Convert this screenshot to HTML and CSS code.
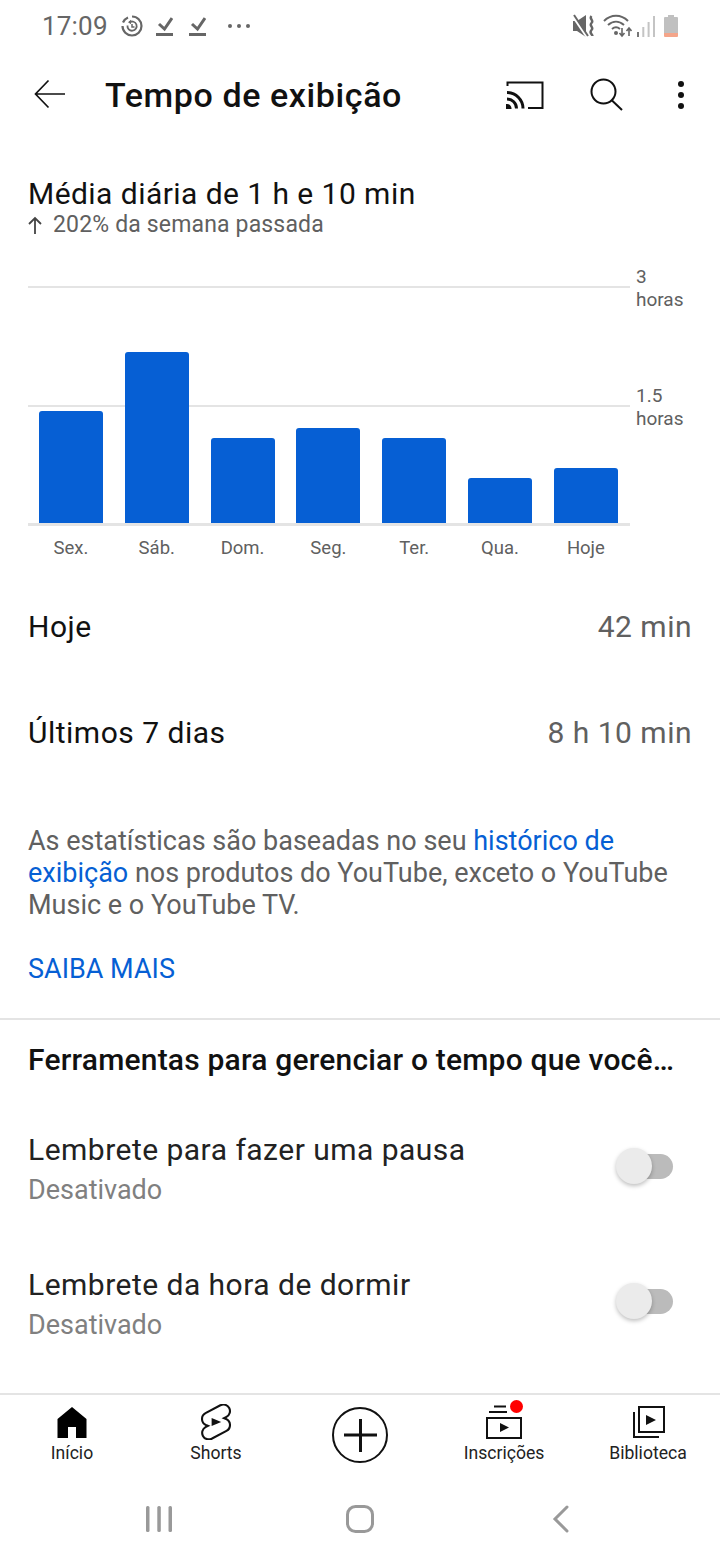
FILE: index.html
```html
<!DOCTYPE html>
<html lang="pt-BR">
<head>
    <meta charset="UTF-8">
    <title>Tempo de exibição</title>
    <link rel="stylesheet" href="styles.css">
</head>
<body>
    <div class="screen">
        <!-- Status bar -->
        <div class="status-bar">
            <span class="clock">17:09</span>
            <svg class="st-icon" width="22" height="22" viewBox="0 0 22 22" fill="none" stroke="#666"><path d="M11 1.500a9.500 9.500 0 1 1-9.500 9.500" stroke-width="2.200"/><path d="M2 7.500A9.500 9.500 0 0 1 7 2.400" stroke-width="2.200"/><path d="M6.500 10.500a4.600 4.600 0 1 0 2-3.200" stroke-width="1.800"/><path d="M10 4.800v4.400l-3-2z" fill="#666" stroke="none"/><path d="M11 9v3h2.500" stroke-width="1.500"/></svg>
            <svg class="st-icon check-one" width="17" height="20" viewBox="0 0 17 20" fill="none" stroke="#666" stroke-width="3"><path d="M3 8l5.500 5L16 2"/><path d="M0 18.500h17"/></svg>
            <svg class="st-icon check-two" width="17" height="20" viewBox="0 0 17 20" fill="none" stroke="#666" stroke-width="3"><path d="M3 8l5.500 5L16 2"/><path d="M0 18.500h17"/></svg>
            <span class="dots"><i></i><i></i><i></i></span>
            <span class="status-right">
                <svg width="24" height="24" viewBox="0 0 24 24"><path d="M1 7h4l9-6v22l-9-6H1z" fill="#666"/><path d="M0 1l15 22" stroke="#fff" stroke-width="2.500"/><path d="M2 1l14 21" stroke="#666" stroke-width="2"/><path d="M19.500 2c-3 3 3 4 0 7s3 4 0 7 1 4 1 6" fill="none" stroke="#666" stroke-width="2.400"/></svg>
                <svg class="wifi" width="29" height="24" viewBox="0 0 29 24" fill="none" stroke="#666" stroke-width="2"><path d="M1 7c7-7 17-7 24 0"/><path d="M5 11c5-4.500 11-4.500 16 0"/><path d="M9 15c3-2.500 5-2.500 8 0"/><circle cx="13" cy="19" r="2" fill="#666" stroke="none"/><path d="M19 14v8m-2.500-3l2.500 3 2.500-3M26 22v-8m-2.500 3l2.500-3 2.500 3" stroke-width="1.600"/></svg>
                <svg class="signal" width="18" height="22" viewBox="0 0 18 22"><path d="M0 17h2v5H0z" fill="#777"/><path d="M5.300 12h2v10h-2zM10.600 7h2v15h-2zM16 1h2v21h-2z" fill="#c4c4c4"/></svg>
                <svg class="battery" width="14" height="22" viewBox="0 0 14 22"><path d="M4 0h6v2h3a1 1 0 0 1 1 1v15H0V3a1 1 0 0 1 1-1h3z" fill="#c0c0c0"/><path d="M0 18h14v3a1 1 0 0 1-1 1H1a1 1 0 0 1-1-1z" fill="#f4a58a"/></svg>
            </span>
        </div>

        <!-- Header -->
        <header class="app-bar">
            <svg class="back" width="34" height="34" viewBox="0 0 34 34" fill="none" stroke="#111" stroke-width="1.700"><path d="M32 16H3M15.500 2.500L2.500 16l13 13.500"/></svg>
            <h1>Tempo de exibição</h1>
            <svg class="cast" width="38" height="30" viewBox="0 0 38 30" fill="none" stroke="#111" stroke-width="2"><path d="M1.500 6V2.500h35V28H22"/><path d="M1 12.500A16 16 0 0 1 17 28.500" stroke-width="3"/><path d="M1 19A9.500 9.500 0 0 1 10.500 28.500" stroke-width="3"/><path d="M0 24h1a4.500 4.500 0 0 1 4.500 5H0z" fill="#111" stroke="none"/></svg>
            <svg class="search" width="34" height="34" viewBox="0 0 34 34" fill="none" stroke="#111" stroke-width="2"><circle cx="13.500" cy="13.500" r="12"/><path d="M21.500 22L32 32"/></svg>
            <span class="more"><i></i><i></i><i></i></span>
        </header>

        <!-- Summary -->
        <section class="summary">
            <h2>Média diária de 1 h e 10 min</h2>
            <p class="trend">
                <svg width="14" height="18" viewBox="0 0 14 18" fill="none" stroke="#444" stroke-width="1.800"><path d="M7 18V2M1 8l6-6 6 6"/></svg>
                <span>202% da semana passada</span>
            </p>
        </section>

        <!-- Chart -->
        <section class="chart">
            <div class="plot">
                <div class="grid-line top-line"></div>
                <div class="grid-line mid-line"></div>
                <span class="axis-label top-label">3<br>horas</span>
                <span class="axis-label mid-label">1.5<br>horas</span>
                <div class="bars">
                    <div class="bar" style="height: 112px"></div>
                    <div class="bar" style="height: 171px"></div>
                    <div class="bar" style="height: 85px"></div>
                    <div class="bar" style="height: 95px"></div>
                    <div class="bar" style="height: 85px"></div>
                    <div class="bar" style="height: 45px"></div>
                    <div class="bar" style="height: 55px"></div>
                </div>
            </div>
            <div class="days">
                <span>Sex.</span><span>Sáb.</span><span>Dom.</span><span>Seg.</span><span>Ter.</span><span>Qua.</span><span>Hoje</span>
            </div>
        </section>

        <!-- Totals -->
        <section class="totals">
            <div class="total-row"><span>Hoje</span><span class="value">42 min</span></div>
            <div class="total-row"><span>Últimos 7 dias</span><span class="value">8 h 10 min</span></div>
        </section>

        <p class="note">As estatísticas são baseadas no seu <a href="#">histórico de exibição</a> nos produtos do YouTube, exceto o YouTube Music e o YouTube TV.</p>
        <a class="learn-more" href="#">SAIBA MAIS</a>

        <hr class="divider">

        <!-- Tools -->
        <section class="tools">
            <h3>Ferramentas para gerenciar o tempo que você assiste</h3>
            <div class="tool-row">
                <div>
                    <div class="tool-name">Lembrete para fazer uma pausa</div>
                    <div class="tool-state">Desativado</div>
                </div>
                <span class="switch"><span class="knob"></span></span>
            </div>
            <div class="tool-row">
                <div>
                    <div class="tool-name">Lembrete da hora de dormir</div>
                    <div class="tool-state">Desativado</div>
                </div>
                <span class="switch"><span class="knob"></span></span>
            </div>
        </section>

        <!-- Bottom tabs -->
        <nav class="tabs">
            <a class="tab" href="#">
                <svg width="36" height="36" viewBox="0 0 36 36"><path d="M18 3L3.500 15v19H14V23h8v11h10.500V15z" fill="#000"/></svg>
                <span>Início</span>
            </a>
            <a class="tab" href="#">
                <svg width="32" height="36" viewBox="3 1.700 18 20.600" fill="none" stroke="#111" stroke-width="1.200"><path d="M17.770 10.320l-1.200-.5L18 9.060a3.740 3.740 0 0 0-3.500-6.620L6 6.940a3.740 3.740 0 0 0 .23 6.740l1.200.49L6 14.930a3.750 3.750 0 0 0 3.500 6.630l8.500-4.500a3.740 3.740 0 0 0-.23-6.740z"/><path d="M9.500 9.700L15 12l-5.500 2.300z" fill="#111" stroke="none"/></svg>
                <span>Shorts</span>
            </a>
            <a class="tab create" href="#">
                <svg width="56" height="56" viewBox="0 0 56 56" fill="none" stroke="#111"><circle cx="28" cy="28" r="27" stroke-width="2"/><path d="M12 28h33M28.500 12v33" stroke-width="3"/></svg>
            </a>
            <a class="tab" href="#">
                <span class="tab-icon">
                    <svg width="36" height="36" viewBox="0 0 36 36" fill="none" stroke="#111" stroke-width="2"><path d="M8 2.500h12M3 8h18"/><path d="M1 14h34v20H1z"/><path d="M14 19l9 4.500-9 4.500z" fill="#111" stroke="none"/></svg>
                    <i class="dot"></i>
                </span>
                <span>Inscrições</span>
            </a>
            <a class="tab" href="#">
                <svg width="36" height="36" viewBox="0 0 36 36" fill="none" stroke="#111" stroke-width="2"><path d="M9 3h25v25H9z"/><path d="M4 8v25h25"/><path d="M16 11l10 5-10 5z" fill="#111" stroke="none"/></svg>
                <span>Biblioteca</span>
            </a>
        </nav>

        <!-- System navigation -->
        <div class="system-nav">
            <svg width="28" height="28" viewBox="0 0 28 28" fill="#999"><rect x="1" y="1" width="3.500" height="26" rx="1.500"/><rect x="12.300" y="1" width="3.500" height="26" rx="1.500"/><rect x="23.500" y="1" width="3.500" height="26" rx="1.500"/></svg>
            <svg width="28" height="28" viewBox="0 0 28 28" fill="none" stroke="#999" stroke-width="3"><rect x="1.500" y="1.500" width="25" height="25" rx="8"/></svg>
            <svg width="18" height="28" viewBox="0 0 18 28" fill="none" stroke="#999" stroke-width="3" stroke-linecap="round"><path d="M15 2L3 14l12 12"/></svg>
        </div>
    </div>
</body>
</html>
```

FILE: styles.css
```css
* {
    box-sizing: border-box;
}

body {
    margin: 0;
    background: #fff;
    font-family: Roboto, sans-serif;
    color: #111;
}

.screen {
    width: 720px;
    height: 1560px;
    overflow: hidden;
}

i {
    display: block;
}

/* Status bar */
.status-bar {
    display: flex;
    align-items: center;
    height: 52px;
    padding: 0 42px;
    color: #666;
}
.clock {
    font-size: 26px;
    letter-spacing: 0.2px;
    margin-right: 13px;
}
.check-one {
    margin-left: 13px;
}
.check-two {
    margin-left: 16px;
}
.dots {
    display: flex;
    gap: 5px;
    margin-left: 22px;
}
.dots i {
    width: 4px;
    height: 4px;
    border-radius: 50%;
    background: #666;
}
.status-right {
    display: flex;
    align-items: center;
    margin-left: auto;
}
.wifi {
    margin-left: 7px;
}
.signal {
    margin-left: 5px;
}
.battery {
    margin-left: 9px;
}

/* Header */
.app-bar {
    display: flex;
    align-items: center;
    height: 86px;
    padding-left: 33px;
}
.app-bar h1 {
    flex: none;
    font-size: 34px;
    font-weight: 500;
    letter-spacing: 0.6px;
    margin: 0 0 0 38px;
    width: 401px;
    white-space: nowrap;
}
.search {
    margin-left: 46px;
}
.more {
    display: flex;
    flex-direction: column;
    gap: 5px;
    margin-left: 54px;
}
.more i {
    width: 6px;
    height: 6px;
    border-radius: 50%;
    background: #111;
}

/* Summary */
.summary {
    padding: 38px 28px 0;
}
.summary h2 {
    font-size: 30px;
    font-weight: 400;
    line-height: 36px;
    letter-spacing: 0.45px;
    margin: 0;
}
.trend {
    display: flex;
    align-items: center;
    gap: 11px;
    margin: 0;
    font-size: 23px;
    line-height: 26px;
    letter-spacing: 0.16px;
    color: #606060;
}

/* Chart */
.chart {
    padding: 0 28px;
    margin-top: 48px;
}
.plot {
    position: relative;
    width: 602px;
    height: 240px;
    border-bottom: 3px solid #e4e4e4;
}
.grid-line {
    position: absolute;
    left: 0;
    right: 0;
    height: 2px;
    background: #e4e4e4;
}
.top-line {
    top: 0;
}
.mid-line {
    top: 119px;
}
.axis-label {
    position: absolute;
    left: 608px;
    font-size: 19px;
    line-height: 23px;
    color: #606060;
    white-space: nowrap;
}
.top-label {
    top: -21px;
}
.mid-label {
    top: 98px;
}
.bars {
    position: absolute;
    left: 11px;
    bottom: 0;
    display: flex;
    align-items: flex-end;
    gap: 21.830px;
}
.bar {
    width: 64px;
    border-radius: 3px 3px 0 0;
    background: #065fd4;
}
.days {
    display: flex;
    width: 602px;
    padding-left: 0;
    margin-top: 10px;
    font-size: 18.500px;
    line-height: 24px;
    color: #606060;
}
.days span {
    width: 85.830px;
    text-align: center;
}

/* Totals */
.totals {
    padding: 0 28px;
    margin-top: 13px;
}
.total-row {
    display: flex;
    justify-content: space-between;
    align-items: center;
    height: 106px;
    font-size: 30px;
    letter-spacing: 0.5px;
}
.total-row .value {
    color: #606060;
}

.note {
    margin: 40px 28px 0;
    font-size: 27px;
    line-height: 32px;
    color: #606060;
}
.note a,
.learn-more {
    color: #065fd4;
    text-decoration: none;
}
.learn-more {
    display: block;
    margin: 32px 28px 0;
    font-size: 27px;
    line-height: 32px;
}
.divider {
    border: none;
    border-top: 2px solid #e4e4e4;
    margin: 33px 0 0;
}

/* Tools */
.tools {
    padding: 22px 28px 0;
    height: 373px;
}
.tools h3 {
    font-size: 30px;
    font-weight: 500;
    line-height: 36px;
    letter-spacing: 0.2px;
    margin: 0;
    white-space: nowrap;
    overflow: hidden;
    text-overflow: ellipsis;
    width: 650px;
}
.tool-row {
    display: flex;
    justify-content: space-between;
    align-items: center;
    height: 135px;
    padding-right: 18px;
}
.tools h3 + .tool-row {
    margin-top: 24px;
}
.tool-name {
    font-size: 30px;
    line-height: 40px;
    letter-spacing: 0.48px;
    color: #222;
}
.tool-state {
    font-size: 27px;
    line-height: 40px;
    color: #808080;
}
.switch {
    position: relative;
    display: block;
    width: 56px;
    height: 25px;
    margin-right: 1px;
    margin-bottom: 6px;
    border-radius: 13px;
    background: #bbb;
}
.knob {
    position: absolute;
    left: -1px;
    top: -6px;
    width: 36px;
    height: 36px;
    border-radius: 50%;
    background: #ebebeb;
    box-shadow: 0 2px 4px rgba(0, 0, 0, 0.25);
}

/* Bottom tabs */
.tabs {
    display: grid;
    grid-template-columns: repeat(5, 144px);
    height: 85px;
    padding-top: 9px;
    border-top: 2px solid #e4e4e4;
}
.tab {
    display: flex;
    flex-direction: column;
    align-items: center;
    gap: 2px;
    color: #222;
    text-decoration: none;
    font-size: 17.600px;
    line-height: 22px;
}
.create {
    padding-top: 3px;
}
.tab-icon {
    position: relative;
    display: block;
    height: 36px;
}
.dot {
    position: absolute;
    top: -4px;
    left: 23.500px;
    width: 13px;
    height: 13px;
    border-radius: 50%;
    background: #f00;
}

/* System navigation */
.system-nav {
    display: grid;
    grid-template-columns: repeat(3, 201px);
    justify-items: center;
    align-items: center;
    height: 82px;
    padding-left: 58px;
}
```
